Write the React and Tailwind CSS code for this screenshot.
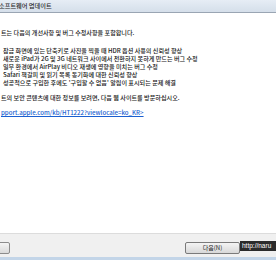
import React from 'react';

const items = [
  '잠금 화면에 있는 단축키로 사진을 찍을 때 HDR 옵션 사용의 신뢰성 향상',
  '새로운 iPad가 2G 및 3G 네트워크 사이에서 전환하지 못하게 만드는 버그 수정',
  '일부 환경에서 AirPlay 비디오 재생에 영향을 미치는 버그 수정',
  'Safari 책갈피 및 읽기 목록 동기화에 대한 신뢰성 향상',
  '성공적으로 구입한 후에도 \'구입할 수 없음\' 알림이 표시되는 문제 해결',
];

const App = () => {
  return (
    <div className="relative w-[276px] h-[260px] bg-white flex flex-col overflow-hidden font-['Noto_Sans_CJK_KR','Noto_Sans',sans-serif] text-[#151515]">
      {/* title bar */}
      <div className="h-[12px] bg-gradient-to-b from-[#e6edf5] to-[#d5dfea] flex items-center">
        <span className="text-[6.2px] leading-[12px] text-[#2a2a2a] font-medium -ml-[1px]">소프트웨어 업데이트</span>
      </div>
      <div className="h-px bg-[#9aa5b3]" />

      {/* body */}
      <div className="flex-1 text-[6.1px] leading-[8px] font-medium whitespace-nowrap">
        <div className="mt-[16px] pl-[1px]">트는 다음의 개선사항 및 버그 수정사항을 포함합니다.</div>
        <div className="mt-[10px] pl-[3px]">
          {items.map((t) => (
            <div key={t} className="h-[8px]">{t}</div>
          ))}
        </div>
        <div className="mt-[7px] pl-[1px]">트의 보안 콘텐츠에 대한 정보를 보려면, 다음 웹 사이트를 방문하십시오.</div>
        <div className="mt-[7px] pl-[1px] text-[#1a5fd0] underline">pport.apple.com/kb/HT1222?viewlocale=ko_KR&gt;</div>
      </div>

      {/* button bar */}
      <div className="h-[24px] border-t border-[#dcdcdc] bg-[#f0f0f0] flex items-start pt-[8px]">
        <div className="w-[12px] h-[12px] -ml-[2px] rounded-[2px] border border-[#8c8c8c] bg-gradient-to-b from-[#f4f4f4] to-[#dadada]" />
        <div className="flex-1" />
        <div className="w-[55px] h-[12px] mr-[36px] rounded-[2px] border border-[#7a7a7a] bg-gradient-to-b from-[#f4f4f4] to-[#d8d8d8] flex items-center justify-center text-[6px] leading-none text-[#222]">
          다음(N)
        </div>
      </div>
      <div className="h-[3px] bg-[#c3d5e8]" />

      {/* url overlay */}
      <div className="absolute left-[240px] top-[241px] h-[10px] w-[40px] bg-[#2b2b2b] text-white text-[6.5px] leading-[10px] pl-[2px] font-['Liberation_Sans',sans-serif]">
        http://naru
      </div>
    </div>
  );
};

export default App;
